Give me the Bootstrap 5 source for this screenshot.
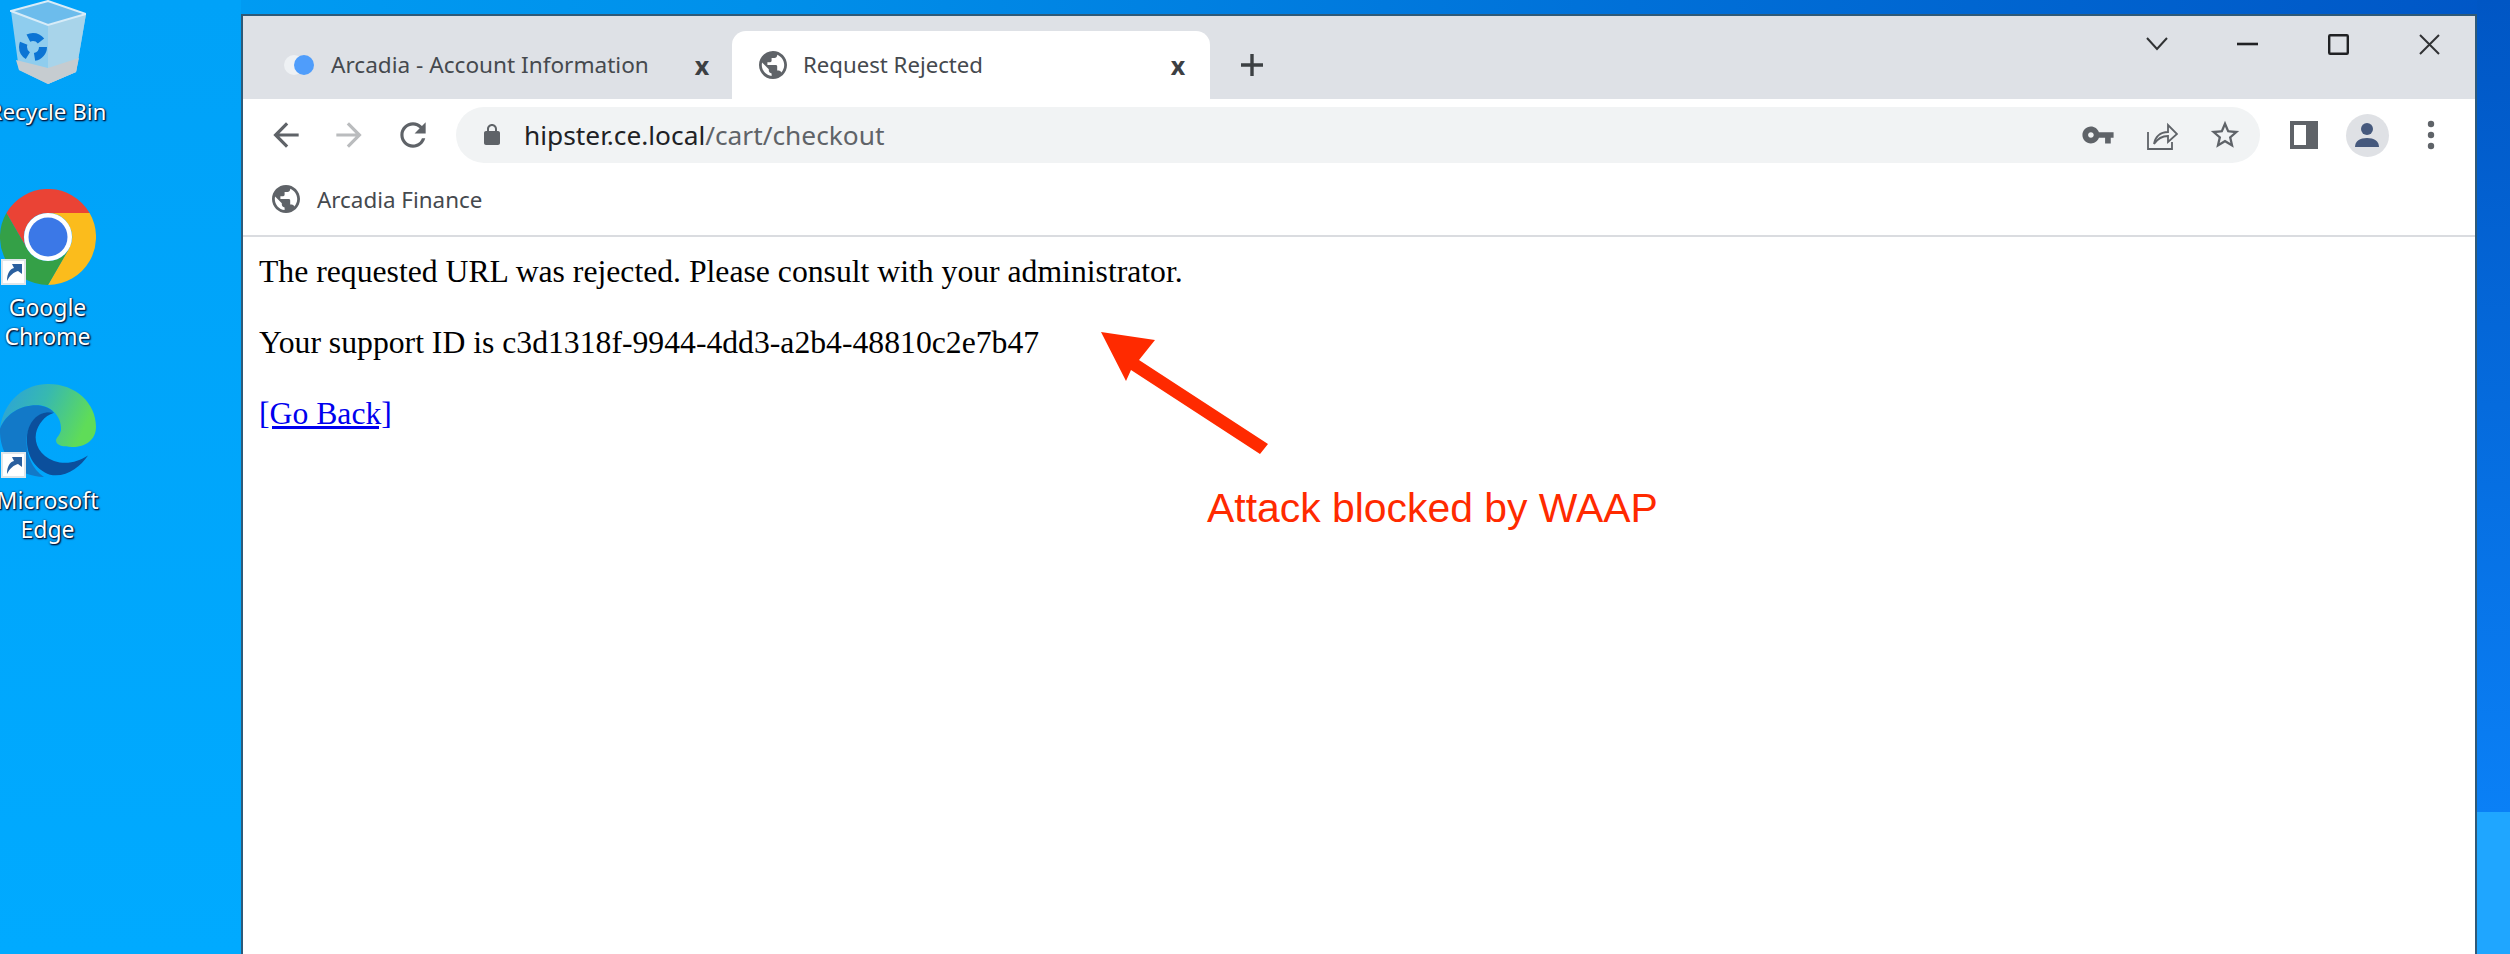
<!DOCTYPE html>
<html lang="en">
<head>
  <meta charset="UTF-8" />
  <meta name="viewport" content="width=device-width, initial-scale=1" />
  <title>Request Rejected</title>
  <link href="https://cdn.jsdelivr.net/npm/bootstrap@5.3.3/dist/css/bootstrap.min.css" rel="stylesheet" />
  <style>
    html, body { height: 100%; }
    body {
      position: relative;
      overflow: hidden;
      background:
        linear-gradient(#0056c4 0, #0a80f6 812px, #1fa6ff 812px, #1fa6ff 100%) right top / 33px 100% no-repeat,
        linear-gradient(#00a2f8 0, #00aaff 100%) left top / 241px 100% no-repeat,
        linear-gradient(90deg, #00a0f6 0%, #0090ea 30%, #0070d8 65%, #0056c6 100%);
    }

    /* desktop icons */
    .desk-icons { position: absolute; left: 0; top: 0; width: 95px; }
    .desk-cell { display: flex; flex-direction: column; align-items: center; }
    .cell-bin { height: 189px; }
    .cell-chrome { height: 195px; }
    .desk-label {
      font: 23px/29px "Noto Sans", sans-serif;
      color: #fff;
      text-align: center;
      white-space: nowrap;
      margin-top: 8px;
      text-shadow: 1px 1px 2px #001a40, 0 0 2px #00224f, 1px 1px 1px #00224f;
    }
    .cell-bin .desk-label { margin-top: 13px; font-size: 22.4px; }
    .shortcut-wrap { position: relative; line-height: 0; }
    .shortcut-badge { position: absolute; left: 1px; bottom: 0; }

    /* browser window */
    .browser-win {
      position: absolute;
      left: 241px; top: 14px; right: 33px; bottom: -10px;
      background: #fff;
      border: 2px solid #2f5a78;
      border-bottom: 0;
    }
    .tab-strip { height: 83px; background: #dee1e6; padding-top: 15px; }
    .tab-text { white-space: nowrap; color: #45494e; font-family: "Noto Sans", sans-serif; }
    .tab-idle { width: 489px; height: 68px; padding: 0 20px 0 40px; }
    .tab-idle .tab-text { font-size: 22.6px; }
    .tab-live { width: 478px; height: 68px; padding: 0 22px 0 27px; background: #fff; border-radius: 14px 14px 0 0; }
    .tab-live .tab-text { font-size: 22.2px; }
    .tab-close { font: 700 25px "Noto Sans", sans-serif; color: #3c4043; line-height: 1; width: 20px; text-align: center; }
    .tab-new { width: 84px; height: 68px; justify-content: center; }
    .win-btns { margin-top: -15px; height: 56px; }
    .win-btn { width: 91px; }

    .tool-row { height: 72px; padding-left: 11px; }
    .tool-btn { width: 63.5px; flex: none; }
    .url-bar { height: 56px; width: 1804px; margin: 0 12px 0 11.5px; padding: 0 3px 0 24px; background: #f1f3f4; border-radius: 28px; flex: none; }
    .url-text { font: 26.3px "Noto Sans", sans-serif; color: #5f6368; margin-left: 20px; }
    .url-text b { font-weight: 400; color: #202124; }
    .mark-row { height: 66px; padding: 0 0 8px 29px; border-bottom: 2px solid #dadce0; }
    .mark-text { font: 22.4px "Noto Sans", sans-serif; color: #45494e; margin-left: 17px; }
    .avatar-dot { width: 43px; height: 43px; border-radius: 50%; background: #dfe1e5; }

    .reject-page { padding: 18px 16px; font: 31.7px/34px "Liberation Serif", serif; color: #000; }
    .reject-page p { margin: 0 0 37px; }
    .reject-page a { color: #0000ee; text-decoration: underline; }

    /* annotation on top of page */
    .note-arrow { position: absolute; left: 1090px; top: 320px; }
    .note-text { position: absolute; left: 1207px; top: 483px; font: 40.9px/50px "Liberation Sans", sans-serif; color: #ff2a00; white-space: nowrap; }
  </style>
</head>
<body>

  <!-- Desktop icons -->
  <div class="desk-icons">
    <div class="desk-cell cell-bin">
      <svg width="76" height="84" viewBox="0 0 76 84">
        <polygon points="1,11 38,25 76,14 66,72 38,84 9,70" fill="#8fcdee"/>
        <polygon points="38,25 76,14 66,72 38,84" fill="#a8d4ea"/>
        <polygon points="1,11 38,1 76,14 38,25" fill="#6cbcec" stroke="#d8ecf8" stroke-width="2"/>
        <polygon points="6,60 38,68 69,58 66,72 38,84 9,70" fill="#c6ccd0"/>
        <g fill="none" stroke="#0b74d4" stroke-width="8">
          <circle cx="23" cy="47" r="10" stroke-dasharray="14 7"/>
        </g>
      </svg>
      <div class="desk-label">Recycle Bin</div>
    </div>
    <div class="desk-cell cell-chrome">
      <div class="shortcut-wrap">
        <svg width="96" height="96" viewBox="0 0 96 96">
          <path d="M6.4 24A48 48 0 0 1 89.6 24L48 24A24 24 0 0 0 27.2 60Z" fill="#ea4335"/>
          <path d="M89.6 24A48 48 0 0 1 48 96L68.8 60A24 24 0 0 0 48 24Z" fill="#fbbc1c"/>
          <path d="M48 96A48 48 0 0 1 6.4 24L27.2 60A24 24 0 0 0 68.8 60Z" fill="#34a047"/>
          <circle cx="48" cy="48" r="24" fill="#fff"/>
          <circle cx="48" cy="48" r="19.5" fill="#3b78e7"/>
        </svg>
        <svg class="shortcut-badge" width="25" height="26" viewBox="0 0 25 26">
          <rect width="25" height="26" fill="#dfe6ea"/><rect x="2" y="2" width="21" height="22" fill="#fff"/>
          <path d="M6 22C6 14 9 10 13 9L11 5L21 5L21 15L17 12C13 13 9 16 6 22Z" fill="#2a5f9e"/>
        </svg>
      </div>
      <div class="desk-label">Google<br>Chrome</div>
    </div>
    <div class="desk-cell">
      <div class="shortcut-wrap">
        <svg width="96" height="94" viewBox="0 0 96 88" preserveAspectRatio="none">
          <defs>
            <linearGradient id="edgeTop" x1="0" y1="0" x2="1" y2="0.3">
              <stop offset="0" stop-color="#2a9fe0"/><stop offset="0.5" stop-color="#37b9b0"/><stop offset="1" stop-color="#5fdc58"/>
            </linearGradient>
          </defs>
          <path d="M0 42C4 14 26 0 48 0C76 0 96 18 96 40C96 52 86 59 72 59C64 59 56 58 56 53C56 50 60 48 61 43C62 30 50 20 38 20C18 20 4 30 0 42Z" fill="url(#edgeTop)"/>
          <path d="M0 42C6 28 20 20 36 20C42 20 50 22 54 27C40 24 30 34 27 48C25 62 30 78 44 87C18 87 -1 68 0 42Z" fill="#1279c8"/>
          <path d="M54 27C40 24 28 34 27 50C26 68 36 80 50 85C66 88 80 78 88 67C78 73 66 76 54 72C40 67 34 56 36 46C38 38 44 30 54 27Z" fill="#0b4f9c"/>
        </svg>
        <svg class="shortcut-badge" width="25" height="26" viewBox="0 0 25 26">
          <rect width="25" height="26" fill="#dfe6ea"/><rect x="2" y="2" width="21" height="22" fill="#fff"/>
          <path d="M6 22C6 14 9 10 13 9L11 5L21 5L21 15L17 12C13 13 9 16 6 22Z" fill="#2a5f9e"/>
        </svg>
      </div>
      <div class="desk-label">Microsoft<br>Edge</div>
    </div>
  </div>

  <!-- Browser window -->
  <div class="browser-win">
    <div class="tab-strip d-flex align-items-start">
      <div class="tab-idle d-flex align-items-center">
        <svg width="32" height="22" viewBox="0 0 32 22"><circle cx="11" cy="11" r="10" fill="#eef1f4"/><circle cx="21" cy="11" r="10" fill="#4f9dfb"/></svg>
        <span class="tab-text ms-3">Arcadia - Account Information</span>
        <span class="tab-close ms-auto">x</span>
      </div>
      <div class="tab-live d-flex align-items-center">
        <svg width="28" height="28" viewBox="2 2 20 20"><path fill="#5f6368" d="M12 2C6.48 2 2 6.48 2 12s4.48 10 10 10 10-4.48 10-10S17.52 2 12 2zm-1 17.93c-3.95-.49-7-3.85-7-7.93 0-.62.08-1.21.21-1.79L9 15v1c0 1.1.9 2 2 2v1.93zm6.9-2.54c-.26-.81-1-1.39-1.9-1.39h-1v-3c0-.55-.45-1-1-1H8v-2h2c.55 0 1-.45 1-1V7h2c1.1 0 2-.9 2-2v-.41c2.93 1.19 5 4.06 5 7.41 0 2.08-.8 3.97-2.1 5.39z"/></svg>
        <span class="tab-text ms-3">Request Rejected</span>
        <span class="tab-close ms-auto">x</span>
      </div>
      <div class="tab-new d-flex align-items-center">
        <svg width="26" height="26" viewBox="0 0 26 26"><path d="M13 2v22M2 13h22" stroke="#3c4043" stroke-width="3.4"/></svg>
      </div>
      <div class="win-btns d-flex align-items-center ms-auto">
        <div class="win-btn d-flex justify-content-center"><svg width="22" height="14" viewBox="0 0 22 14"><path d="M1 1l10 11L21 1" fill="none" stroke="#303234" stroke-width="2"/></svg></div>
        <div class="win-btn d-flex justify-content-center"><svg width="21" height="4" viewBox="0 0 21 4"><path d="M0 2h21" stroke="#202124" stroke-width="2.6"/></svg></div>
        <div class="win-btn d-flex justify-content-center"><svg width="21" height="21" viewBox="0 0 21 21"><rect x="1.2" y="1.2" width="18.6" height="18.6" fill="none" stroke="#202124" stroke-width="2.4" rx="1"/></svg></div>
        <div class="win-btn d-flex justify-content-center"><svg width="21" height="21" viewBox="0 0 21 21"><path d="M1 1l19 19M20 1L1 20" stroke="#303234" stroke-width="2"/></svg></div>
      </div>
    </div>

    <div class="tool-row d-flex align-items-center">
      <div class="tool-btn d-flex justify-content-center"><svg width="38" height="38" viewBox="0 0 24 24"><path fill="#5f6368" d="M20 11H7.830l5.590-5.590L12 4l-8 8 8 8 1.410-1.410L7.830 13H20v-2z"/></svg></div>
      <div class="tool-btn d-flex justify-content-center"><svg width="38" height="38" viewBox="0 0 24 24"><path fill="#babcbe" d="M4 11h12.170l-5.590-5.590L12 4l8 8-8 8-1.410-1.410L16.170 13H4v-2z"/></svg></div>
      <div class="tool-btn d-flex justify-content-center"><svg width="38" height="38" viewBox="0 0 24 24"><path fill="#5f6368" d="M17.650 6.350C16.200 4.900 14.210 4 12 4c-4.420 0-7.990 3.580-7.990 8s3.570 8 7.990 8c3.730 0 6.840-2.550 7.730-6h-2.080c-.82 2.330-3.040 4-5.650 4-3.310 0-6-2.690-6-6s2.690-6 6-6c1.660 0 3.140.69 4.220 1.780L13 11h7V4l-2.350 2.350z"/></svg></div>
      <div class="url-bar d-flex align-items-center">
        <svg width="24" height="24" viewBox="0 0 24 24"><path fill="#5f6368" d="M18 8h-1V6c0-2.760-2.240-5-5-5S7 3.240 7 6v2H6c-1.100 0-2 .9-2 2v10c0 1.100.9 2 2 2h12c1.100 0 2-.9 2-2V10c0-1.100-.9-2-2-2zM9 6c0-1.660 1.340-3 3-3s3 1.340 3 3v2H9V6z"/></svg>
        <span class="url-text"><b>hipster.ce.local</b>/cart/checkout</span>
        <div class="tool-btn d-flex justify-content-center ms-auto"><svg width="34" height="34" viewBox="0 0 24 24"><path fill="#5f6368" d="M12.650 10C11.830 7.670 9.610 6 7 6c-3.310 0-6 2.690-6 6s2.690 6 6 6c2.610 0 4.830-1.670 5.650-4H17v4h4v-4h2v-4H12.650zM7 14c-1.100 0-2-.9-2-2s.9-2 2-2 2 .9 2 2-.9 2-2 2z"/></svg></div>
        <div class="tool-btn d-flex justify-content-center"><svg width="32" height="30" viewBox="0 0 32 30"><path d="M2 12v17h24v-7" fill="none" stroke="#5f6368" stroke-width="1.8"/><path d="M8 24c1-7 6-12 14-12V5l9 9-9 8v-6c-6 0-10 2-14 8z" fill="none" stroke="#5f6368" stroke-width="1.8"/></svg></div>
        <div class="tool-btn d-flex justify-content-center"><svg width="34" height="34" viewBox="0 0 24 24"><path fill="#5f6368" d="M22 9.240l-7.190-.62L12 2 9.190 8.630 2 9.240l5.460 4.730L5.820 21 12 17.270 18.180 21l-1.630-7.030L22 9.240zM12 15.400l-3.760 2.270 1-4.280-3.320-2.880 4.380-.38L12 6.100l1.710 4.040 4.380.38-3.320 2.880 1 4.280L12 15.400z"/></svg></div>
      </div>
      <div class="tool-btn d-flex justify-content-center"><svg width="28" height="28" viewBox="0 0 28 28"><path fill="#5f6368" fill-rule="evenodd" d="M0 0h28v28H0zM4 4v20h12V4z"/></svg></div>
      <div class="tool-btn d-flex justify-content-center">
        <div class="avatar-dot d-flex align-items-center justify-content-center"><svg width="26" height="26" viewBox="0 0 26 26"><circle cx="13" cy="7" r="6" fill="#46597d"/><path d="M1 25c0-6 5-9 12-9s12 3 12 9z" fill="#46597d"/></svg></div>
      </div>
      <div class="tool-btn d-flex justify-content-center"><svg width="8" height="30" viewBox="0 0 8 30"><circle cx="4" cy="4" r="3.200" fill="#5f6368"/><circle cx="4" cy="15" r="3.200" fill="#5f6368"/><circle cx="4" cy="26" r="3.200" fill="#5f6368"/></svg></div>
    </div>

    <div class="mark-row d-flex align-items-center">
      <svg width="28" height="28" viewBox="2 2 20 20"><path fill="#5f6368" d="M12 2C6.48 2 2 6.48 2 12s4.48 10 10 10 10-4.48 10-10S17.52 2 12 2zm-1 17.93c-3.95-.49-7-3.85-7-7.93 0-.62.08-1.21.21-1.79L9 15v1c0 1.1.9 2 2 2v1.93zm6.9-2.54c-.26-.81-1-1.39-1.9-1.39h-1v-3c0-.55-.45-1-1-1H8v-2h2c.55 0 1-.45 1-1V7h2c1.1 0 2-.9 2-2v-.41c2.93 1.19 5 4.06 5 7.41 0 2.08-.8 3.97-2.1 5.39z"/></svg>
      <span class="mark-text">Arcadia Finance</span>
    </div>

    <div class="reject-page">
      <p>The requested URL was rejected. Please consult with your administrator.</p>
      <p>Your support ID is c3d1318f-9944-4dd3-a2b4-48810c2e7b47</p>
      <p><a href="#">[Go Back]</a></p>
    </div>
  </div>

  <!-- Annotation -->
  <svg class="note-arrow" width="190" height="140" viewBox="1090 320 190 140">
    <polygon points="1101,332 1155,340 1139,360 1268,444 1260,454 1131,370 1126,381" fill="#ff2a00"/>
  </svg>
  <div class="note-text">Attack blocked by WAAP</div>

  <script src="https://cdn.jsdelivr.net/npm/bootstrap@5.3.3/dist/js/bootstrap.bundle.min.js"></script>
</body>
</html>
